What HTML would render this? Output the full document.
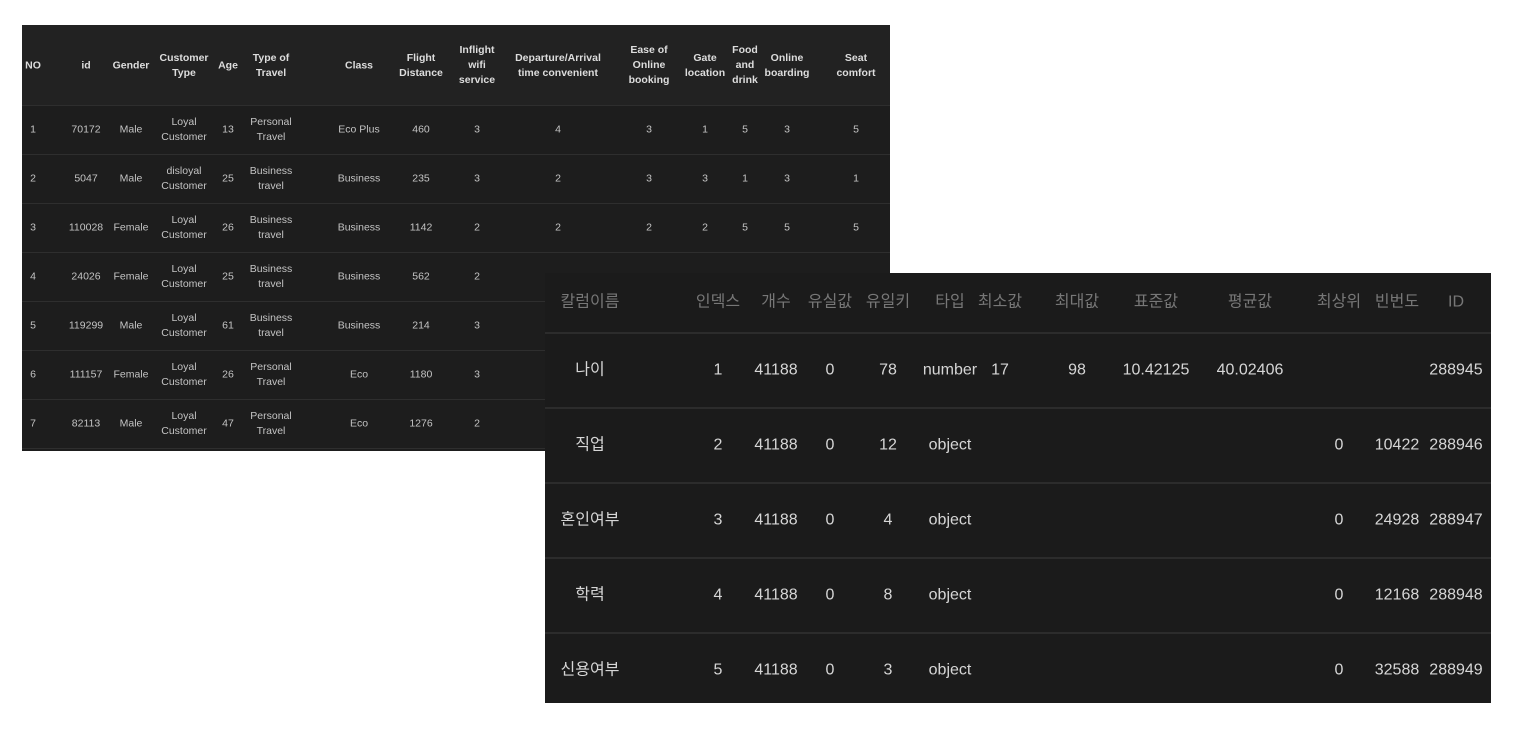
<!DOCTYPE html><html><head><meta charset="utf-8"><style>
body{margin:0;width:1516px;height:736px;background:#fff;position:relative;overflow:hidden;font-family:"Liberation Sans","Noto Sans CJK KR",sans-serif}
.p{position:absolute}
.c{position:absolute;transform:translate(-50%,-50%);text-align:center;white-space:nowrap;line-height:1.45}
#a{left:22px;top:25px;width:868px;height:426px;background:#1d1d1d;font-size:10.5px;color:#c4c4c4}
#a .h{position:absolute;left:0;top:0;width:868px;height:80px;background:#222}
#a .l{position:absolute;left:0;width:868px;height:1px;background:#2e2e2e}
#b{left:545px;top:273px;width:946px;height:430px;background:#1b1b1b;color:#d6d6d6;font-size:16px}
#b .l{position:absolute;left:0;width:946px;height:2px;background:#2c2c2c}
#b .hh{color:#777}
</style></head><body>
<div class="p" id="a"><div class="h"></div>
<div class="l" style="top:80px"></div><div class="l" style="top:129px"></div><div class="l" style="top:178px"></div><div class="l" style="top:227px"></div><div class="l" style="top:276px"></div><div class="l" style="top:325px"></div><div class="l" style="top:374px"></div><div class="l" style="top:423px"></div>
<div id="ac"></div></div>
<div class="p" id="b">
<div class="l" style="top:59px"></div><div class="l" style="top:134px"></div><div class="l" style="top:209px"></div><div class="l" style="top:284px"></div><div class="l" style="top:359px"></div>
<div id="bc"></div></div>
<script>
var ax=[11,64,109,162,206,249,337,399,455,536,627,683,723,765,834];
var hd=["NO","id","Gender","Customer<br>Type","Age","Type of<br>Travel","Class","Flight<br>Distance","Inflight<br>wifi<br>service","Departure/Arrival<br>time convenient","Ease of<br>Online<br>booking","Gate<br>location","Food<br>and<br>drink","Online<br>boarding","Seat<br>comfort"];
var rows=[["1","70172","Male","Loyal<br>Customer","13","Personal<br>Travel","Eco Plus","460","3","4","3","1","5","3","5"],
["2","5047","Male","disloyal<br>Customer","25","Business<br>travel","Business","235","3","2","3","3","1","3","1"],
["3","110028","Female","Loyal<br>Customer","26","Business<br>travel","Business","1142","2","2","2","2","5","5","5"],
["4","24026","Female","Loyal<br>Customer","25","Business<br>travel","Business","562","2","-","-","-","-","-","-"],
["5","119299","Male","Loyal<br>Customer","61","Business<br>travel","Business","214","3","","","","","",""],
["6","111157","Female","Loyal<br>Customer","26","Personal<br>Travel","Eco","1180","3","","","","","",""],
["7","82113","Male","Loyal<br>Customer","47","Personal<br>Travel","Eco","1276","2","","","","","",""]];
var s="";
hd.forEach(function(t,i){s+='<div class="c" style="left:'+ax[i]+'px;top:41px;font-weight:bold;color:#ddd">'+t+'</div>'});
rows.forEach(function(r,j){var y=105+49*j;r.forEach(function(t,i){s+='<div class="c" style="left:'+ax[i]+'px;top:'+y+'px">'+t+'</div>'})});
document.getElementById('ac').innerHTML=s;
var bx=[45,173,231,285,343,405,455,532,611,705,794,852,911];
var bh=["칼럼이름","인덱스","개수","유실값","유일키","타입","최소값","최대값","표준값","평균값","최상위","빈번도","ID"];
var br=[["나이","1","41188","0","78","number","17","98","10.42125","40.02406","","","288945"],
["직업","2","41188","0","12","object","","","","","0","10422","288946"],
["혼인여부","3","41188","0","4","object","","","","","0","24928","288947"],
["학력","4","41188","0","8","object","","","","","0","12168","288948"],
["신용여부","5","41188","0","3","object","","","","","0","32588","288949"]];
s="";
bh.forEach(function(t,i){s+='<div class="c hh" style="left:'+bx[i]+'px;top:29px">'+t+'</div>'});
br.forEach(function(r,j){var y=97+75*j;r.forEach(function(t,i){s+='<div class="c" style="left:'+bx[i]+'px;top:'+y+'px">'+t+'</div>'})});
document.getElementById('bc').innerHTML=s;
</script>
</body></html>
